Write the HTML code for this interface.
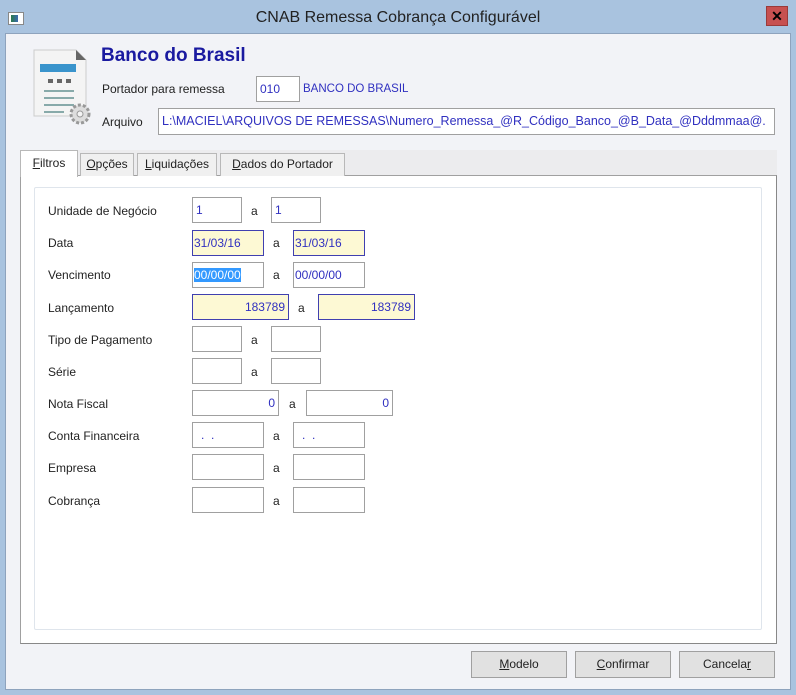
<!DOCTYPE html>
<html><head><meta charset="utf-8"><style>
*{box-sizing:border-box;margin:0;padding:0}
body{width:796px;height:695px;overflow:hidden;background:#a9c3df;font-family:"Liberation Sans",sans-serif;font-size:12px;color:#222;position:relative}
.a{position:absolute}
.client{position:absolute;left:5px;top:33px;width:786px;height:657px;background:#f2f3f7;border:1px solid #8ea3bd}
.in{position:absolute;height:26px;background:#fff;border:1px solid #a0a0a0;color:#3030c0;font-size:12px;line-height:24px;padding:0 3px;white-space:nowrap;overflow:hidden}
.y{background:#fdf9d4;border:1px solid #4040b0}
.r{text-align:right}
.lbl{position:absolute;font-size:12px;color:#222}
.tab{position:absolute;top:153px;height:23px;background:#f0f0f0;border:1px solid #b8b8b8;border-bottom:none;font-size:12px;line-height:21px;text-align:center}
.btn{position:absolute;top:651px;width:96px;height:27px;background:#e1e1e1;border:1px solid #a0a0a0;text-align:center;line-height:25px;font-size:12px}
u{text-decoration:underline}
</style></head><body>
<div class="a" style="left:8px;top:12px;width:16px;height:13px;background:#fff;border:1px solid #888"><div style="position:absolute;left:2px;top:2px;width:7px;height:7px;background:linear-gradient(90deg,#2a7a4a,#3a6ab0)"></div></div>
<div class="a" style="left:0;top:9px;width:796px;text-align:center;font-size:16px;color:#222">CNAB Remessa Cobrança Configurável</div>
<div class="a" style="left:766px;top:6px;width:22px;height:20px;background:#c75050;border:1px solid #9a3a3a;color:#000;font-weight:bold;font-size:14px;text-align:center;line-height:18px">✕</div>
<div class="client"></div>
<svg class="a" style="left:24px;top:46px" width="70" height="80" viewBox="0 0 70 80">
<path d="M10 4 H52 L62 14 V70 H10 Z" fill="#f4f4f4" stroke="#ccc"/>
<path d="M52 4 L62 14 H52 Z" fill="#666"/>
<rect x="16" y="18" width="36" height="8" fill="#3a94cc"/>
<rect x="24" y="33" width="5" height="4" fill="#666"/><rect x="33" y="33" width="5" height="4" fill="#666"/><rect x="42" y="33" width="5" height="4" fill="#666"/>
<g stroke="#8aa" stroke-width="2"><line x1="20" y1="45" x2="50" y2="45"/><line x1="20" y1="52" x2="50" y2="52"/><line x1="20" y1="59" x2="50" y2="59"/><line x1="20" y1="66" x2="40" y2="66"/></g>
<circle cx="56" cy="68" r="9" fill="#ddd" stroke="#999" stroke-width="3" stroke-dasharray="3 2"/><circle cx="56" cy="68" r="3" fill="#f4f4f4" stroke="#999"/>
</svg>
<div class="a" style="left:101px;top:45px;font-size:19px;font-weight:bold;color:#1a1aa0">Banco do Brasil</div>
<div class="lbl" style="left:102px;top:82px">Portador para remessa</div>
<div class="in" style="left:256px;top:76px;width:44px">010</div>
<div class="lbl" style="left:303px;top:83px;color:#3030c0;font-size:11.5px">BANCO DO BRASIL</div>
<div class="lbl" style="left:102px;top:115px">Arquivo</div>
<div class="in" style="left:158px;top:108px;width:617px;height:27px;font-size:12.5px">L:\MACIEL\ARQUIVOS DE REMESSAS\Numero_Remessa_@R_Código_Banco_@B_Data_@Dddmmaa@.</div>
<div class="a" style="left:20px;top:150px;width:757px;height:26px;background:#ececee"></div>
<div class="a" style="left:20px;top:175px;width:757px;height:469px;background:#fff;border:1px solid #a0a0a0;border-right-color:#888;border-bottom-color:#888"></div>
<div class="a" style="left:34px;top:187px;width:728px;height:443px;border:1px solid #dfe5ec;border-radius:2px"></div>
<div class="tab" style="left:80px;width:54px"><u>O</u>pções</div>
<div class="tab" style="left:137px;width:80px"><u>L</u>iquidações</div>
<div class="tab" style="left:220px;width:125px"><u>D</u>ados do Portador</div>
<div class="tab" style="left:20px;top:150px;width:58px;height:27px;background:#fff;line-height:24px"><u>F</u>iltros</div>

<div class="lbl" style="left:48px;top:204px">Unidade de Negócio</div>
<div class="in" style="left:192px;top:197px;width:50px">1</div><div class="lbl" style="left:251px;top:204px">a</div><div class="in" style="left:271px;top:197px;width:50px">1</div>
<div class="lbl" style="left:48px;top:236px">Data</div>
<div class="in y" style="left:192px;top:230px;width:72px;padding-left:1px">31/03/16</div><div class="lbl" style="left:273px;top:236px">a</div><div class="in y" style="left:293px;top:230px;width:72px;padding-left:1px">31/03/16</div>
<div class="lbl" style="left:48px;top:268px">Vencimento</div>
<div class="in" style="left:192px;top:262px;width:72px;padding-left:1px"><span style="background:#3399ff;color:#fff">00/00/00</span></div><div class="lbl" style="left:273px;top:268px">a</div><div class="in" style="left:293px;top:262px;width:72px;padding-left:1px">00/00/00</div>
<div class="lbl" style="left:48px;top:301px">Lançamento</div>
<div class="in y r" style="left:192px;top:294px;width:97px">183789</div><div class="lbl" style="left:298px;top:301px">a</div><div class="in y r" style="left:318px;top:294px;width:97px">183789</div>
<div class="lbl" style="left:48px;top:333px">Tipo de Pagamento</div>
<div class="in" style="left:192px;top:326px;width:50px"></div><div class="lbl" style="left:251px;top:333px">a</div><div class="in" style="left:271px;top:326px;width:50px"></div>
<div class="lbl" style="left:48px;top:365px">Série</div>
<div class="in" style="left:192px;top:358px;width:50px"></div><div class="lbl" style="left:251px;top:365px">a</div><div class="in" style="left:271px;top:358px;width:50px"></div>
<div class="lbl" style="left:48px;top:397px">Nota Fiscal</div>
<div class="in r" style="left:192px;top:390px;width:87px">0</div><div class="lbl" style="left:289px;top:397px">a</div><div class="in r" style="left:306px;top:390px;width:87px">0</div>
<div class="lbl" style="left:48px;top:429px">Conta Financeira</div>
<div class="in" style="left:192px;top:422px;width:72px;padding-left:8px">.&nbsp;&nbsp;.</div><div class="lbl" style="left:273px;top:429px">a</div><div class="in" style="left:293px;top:422px;width:72px;padding-left:8px">.&nbsp;&nbsp;.</div>
<div class="lbl" style="left:48px;top:461px">Empresa</div>
<div class="in" style="left:192px;top:454px;width:72px"></div><div class="lbl" style="left:273px;top:461px">a</div><div class="in" style="left:293px;top:454px;width:72px"></div>
<div class="lbl" style="left:48px;top:494px">Cobrança</div>
<div class="in" style="left:192px;top:487px;width:72px"></div><div class="lbl" style="left:273px;top:494px">a</div><div class="in" style="left:293px;top:487px;width:72px"></div>

<div class="btn" style="left:471px"><u>M</u>odelo</div>
<div class="btn" style="left:575px"><u>C</u>onfirmar</div>
<div class="btn" style="left:679px">Cancela<u>r</u></div>
</body></html>
